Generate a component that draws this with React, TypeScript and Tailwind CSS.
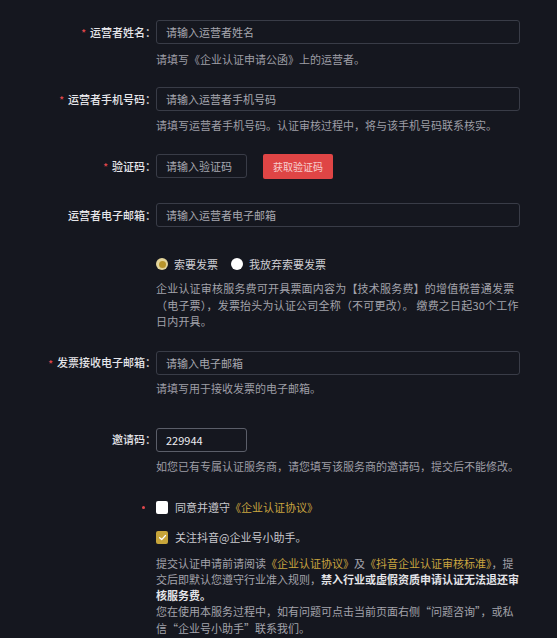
import React from "react";

function Star() {
  return <span className="text-[#e5484d] text-[10px] leading-none mr-[4px] relative top-[1px]">*</span>;
}

function Label({ text, req }: { text: string; req?: boolean }) {
  return (
    <div className="w-[156px] shrink-0 flex justify-end items-center text-[#e6e6ea] font-medium text-[11px]">
      {req && <Star />}
      <span>{text}：</span>
    </div>
  );
}

function TextInput({ ph, w, value, bright }: { ph?: string; w: string; value?: string; bright?: boolean }) {
  return (
    <input
      readOnly
      defaultValue={value}
      placeholder={ph}
      className={`${w} h-[24px] rounded-[3px] border ${bright ? "border-[#5b5e69]" : "border-[#393c47]"} bg-transparent pl-[9px] text-[11px] text-[#ececf0] placeholder:text-[#a7a7af] outline-none`}
    />
  );
}

function Helper({ children, mt }: { children: React.ReactNode; mt: string }) {
  return <div className={`${mt} ml-[156px] text-[#9e9ea6] text-[11px] leading-[16px] whitespace-nowrap`}>{children}</div>;
}

export default function App() {
  return (
    <div className="w-[557px] h-[638px] overflow-hidden bg-[#15171f] pt-[20px] font-['Noto_Sans_CJK_SC','Noto_Sans',sans-serif] text-[11px]">
      {/* Row 1 */}
      <div className="flex items-center">
        <Label text="运营者姓名" req />
        <TextInput ph="请输入运营者姓名" w="w-[364px]" />
      </div>
      <Helper mt="mt-[7px]">请填写《企业认证申请公函》上的运营者。</Helper>

      {/* Row 2 */}
      <div className="flex items-center mt-[20px]">
        <Label text="运营者手机号码" req />
        <TextInput ph="请输入运营者手机号码" w="w-[364px]" />
      </div>
      <Helper mt="mt-[6px]">请填写运营者手机号码。认证审核过程中，将与该手机号码联系核实。</Helper>

      {/* Row 3 */}
      <div className="flex items-center mt-[20px]">
        <Label text="验证码" req />
        <TextInput ph="请输入验证码" w="w-[91px]" />
        <button className="ml-[16px] w-[70px] h-[25px] mt-[1px] rounded-[2px] bg-[#df4545] text-[#f7cfcf] text-[10px] flex items-center justify-center">
          获取验证码
        </button>
      </div>

      {/* Row 4 */}
      <div className="flex items-center mt-[24px]">
        <Label text="运营者电子邮箱" />
        <TextInput ph="请输入运营者电子邮箱" w="w-[364px]" />
      </div>

      {/* Radio */}
      <div className="ml-[156px] mt-[29px] h-[16px] flex items-center text-[#cfcfd4] text-[11px]">
        <span className="w-[12px] h-[12px] rounded-full bg-[#e3d49a] flex items-center justify-center">
          <span className="w-[7px] h-[7px] rounded-full bg-[#b8952c]" />
        </span>
        <span className="ml-[6px]">索要发票</span>
        <span className="ml-[13px] w-[12px] h-[12px] rounded-full bg-white" />
        <span className="ml-[6px]">我放弃索要发票</span>
      </div>

      <div className="ml-[156px] mt-[8px] text-[#a3a3ab] text-[11px] leading-[16.5px] whitespace-nowrap tracking-[0.2px]">
        <div>企业认证审核服务费可开具票面内容为【技术服务费】的增值税普通发票</div>
        <div>（电子票），发票抬头为认证公司全称（不可更改）。 缴费之日起30个工作</div>
        <div>日内开具。</div>
      </div>

      {/* Invoice email */}
      <div className="flex items-center mt-[21px]">
        <Label text="发票接收电子邮箱" req />
        <TextInput ph="请输入电子邮箱" w="w-[364px]" />
      </div>
      <Helper mt="mt-[5px]">请填写用于接收发票的电子邮箱。</Helper>

      {/* Invite */}
      <div className="flex items-center mt-[32px]">
        <Label text="邀请码" />
        <TextInput value="229944" w="w-[91px]" bright />
      </div>
      <Helper mt="mt-[6px]">如您已有专属认证服务商，请您填写该服务商的邀请码，提交后不能修改。</Helper>

      {/* Checkbox 1 */}
      <div className="flex items-center mt-[26px] h-[16px]">
        <div className="w-[156px] flex justify-end pr-[11px]">
          <span className="w-[3px] h-[3px] rounded-full bg-[#e5484d]" />
        </div>
        <span className="w-[12px] h-[13px] rounded-[2px] bg-white" />
        <span className="ml-[7px] text-[#c9c9ce]">同意并遵守</span>
        <span className="text-[#c9a53f]">《企业认证协议》</span>
      </div>

      {/* Checkbox 2 */}
      <div className="flex items-center mt-[14px] h-[16px] ml-[156px]">
        <span className="w-[12px] h-[13px] rounded-[2px] bg-[#c7a53a] flex items-center justify-center">
          <svg width="9" height="9" viewBox="0 0 10 10" fill="none">
            <path d="M1.8 5.2 L4.1 7.3 L8.3 2.8" stroke="#fff" strokeWidth="1.4" strokeLinecap="round" strokeLinejoin="round" />
          </svg>
        </span>
        <span className="ml-[7px] text-[#c9c9ce]">关注抖音@企业号小助手。</span>
      </div>

      <div className="ml-[156px] mt-[9px] text-[#a3a3ab] text-[11px] leading-[16.25px] whitespace-nowrap">
        <div>
          提交认证申请前请阅读<span className="text-[#c9a53f]">《企业认证协议》</span>及<span className="text-[#c9a53f]">《抖音企业认证审核标准》</span>，提
        </div>
        <div>
          交后即默认您遵守行业准入规则，<span className="text-[#e4e4e8] font-semibold">禁入行业或虚假资质申请认证无法退还审</span>
        </div>
        <div>
          <span className="text-[#e4e4e8] font-semibold">核服务费。</span>
        </div>
        <div>您在使用本服务过程中，如有问题可点击当前页面右侧“问题咨询”，或私</div>
        <div>信“企业号小助手”联系我们。</div>
      </div>
    </div>
  );
}
